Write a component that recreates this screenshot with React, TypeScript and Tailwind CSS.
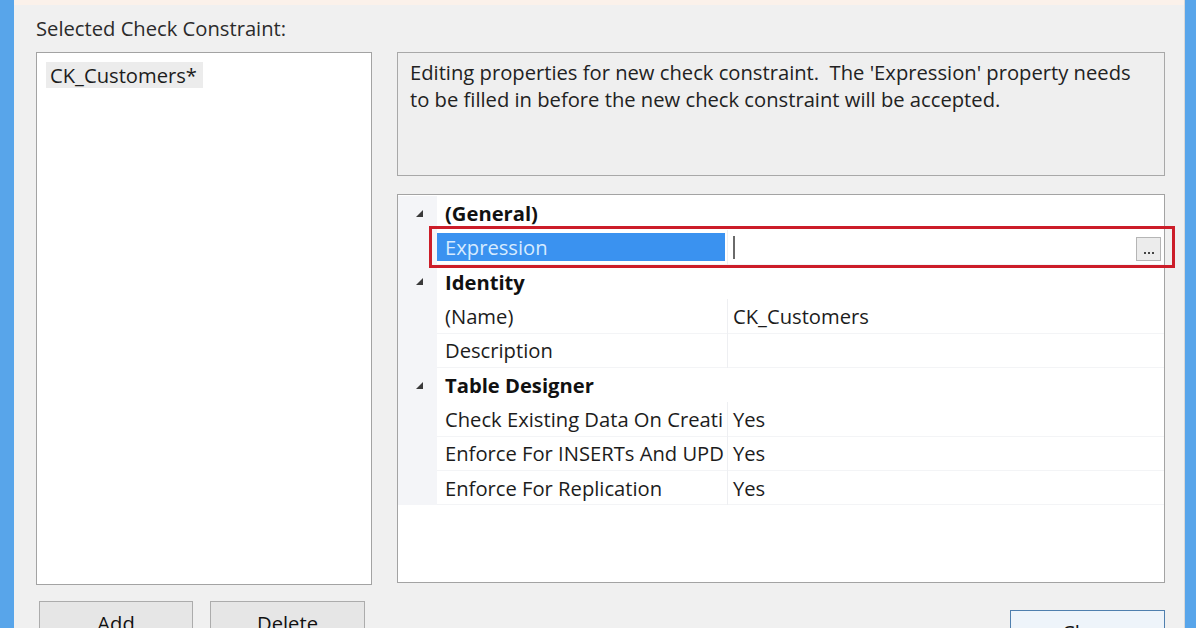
import React from "react";

type Row =
  | { kind: "cat"; label: string }
  | { kind: "prop"; name: string; value?: string; selected?: boolean };

const ROWS: Row[] = [
  { kind: "cat", label: "(General)" },
  { kind: "prop", name: "Expression", selected: true },
  { kind: "cat", label: "Identity" },
  { kind: "prop", name: "(Name)", value: "CK_Customers" },
  { kind: "prop", name: "Description", value: "" },
  { kind: "cat", label: "Table Designer" },
  { kind: "prop", name: "Check Existing Data On Creati", value: "Yes" },
  { kind: "prop", name: "Enforce For INSERTs And UPD", value: "Yes" },
  { kind: "prop", name: "Enforce For Replication", value: "Yes" },
];

function Expander() {
  return (
    <svg width="7" height="7" viewBox="0 0 7 7" className="block">
      <polygon points="7,0 7,7 0,7" fill="#3a3a3a" />
    </svg>
  );
}

function GridRow({ row }: { row: Row }) {
  if (row.kind === "cat") {
    return (
      <div className="flex h-[34.375px] items-center">
        <div className="flex h-full w-[39px] items-center justify-end bg-[#f4f5f8] pr-[14px]">
          <Expander />
        </div>
        <span className="pl-[8px] font-bold text-[#111]">{row.label}</span>
      </div>
    );
  }
  return (
    <div className="flex h-[34.375px] items-stretch">
      <div className="w-[39px] bg-[#f4f5f8]" />
      <div className="flex w-[290px] items-stretch border-b border-[#f3f4f6] py-[3px] pr-[2px]">
        <div
          className={
            row.selected
              ? "flex flex-1 items-center overflow-hidden whitespace-nowrap bg-[#3a92f0] pl-[8px] text-[#d6ebff]"
              : "flex flex-1 items-center overflow-hidden whitespace-nowrap pl-[8px]"
          }
        >
          {row.name}
        </div>
      </div>
      <div className="w-px bg-[#eeeff2]" />
      <div className="relative flex flex-1 items-center border-b border-[#f3f4f6] pl-[5px]">
        {row.selected ? (
          <>
            <div className="h-[23px] w-[2px] bg-[#6a6a6a]" />
            <div className="absolute right-[3px] top-[7px] flex h-[24px] w-[25px] items-end justify-center gap-[2px] border border-[#b5b5b5] bg-[#ececec] pb-[6px]">
              <div className="h-[2px] w-[2px] bg-[#444]" />
              <div className="h-[2px] w-[2px] bg-[#444]" />
              <div className="h-[2px] w-[2px] bg-[#444]" />
            </div>
          </>
        ) : (
          <span>{row.value}</span>
        )}
      </div>
    </div>
  );
}

function Button({ label, primary, className }: { label: string; primary?: boolean; className?: string }) {
  return (
    <div
      className={
        (primary
          ? "border border-[#4f7fae] bg-[#eef4fa] "
          : "border border-[#acacac] bg-[#e6e6e6] ") +
        "flex h-[42px] shrink-0 items-center justify-center pt-[2px] text-[#111] " +
        (className ?? "")
      }
    >
      {label}
    </div>
  );
}

export default function App() {
  return (
    <div className="flex h-[628px] w-[1196px] overflow-hidden bg-[#f0f0f0] font-['Open_Sans',sans-serif] text-[20.2px] text-[#1c1c1c]">
      <div className="w-[14px] shrink-0 bg-[#58a5ea]" />
      <div className="flex flex-1 flex-col overflow-hidden">
        <div className="h-[5px] shrink-0 bg-[#fbf1ea]" />
        <div className="shrink-0 pl-[22px] pt-[11px]">
          <div className="h-[24px] leading-[24px] text-[#2b2b2b]">Selected Check Constraint:</div>
          <div className="mt-[12px] flex gap-[25px]">
            {/* left: constraint list + buttons */}
            <div className="flex w-[336px] flex-col">
              <div className="h-[533px] shrink-0 border border-[#a3a3a3] bg-white pl-[9px] pt-[7px]">
                <span className="inline-block bg-[#ececec] pl-[4px] pr-[6px] leading-[26px]">CK_Customers*</span>
              </div>
              <div className="mt-[16px] flex gap-[17px] pl-[3px]">
                <Button label="Add" className="w-[154px]" />
                <Button label="Delete" className="w-[155px]" />
              </div>
            </div>
            {/* right: description + property grid */}
            <div className="flex w-[768px] flex-col">
              <div className="h-[124px] shrink-0 border border-[#a8a8a8] bg-[#efefef] px-[12px] pt-[6px] leading-[27px] text-[#222]">
                Editing properties for new check constraint.&nbsp; The 'Expression' property needs to be filled in before the new check constraint will be accepted.
              </div>
              <div className="relative mt-[18px] h-[389px] shrink-0 border border-[#a3a3a3] bg-white pt-[1px]">
                {ROWS.map((r, i) => (
                  <GridRow key={i} row={r} />
                ))}
                <div className="pointer-events-none absolute left-[31px] top-[31px] h-[42px] w-[746px] border-[3px] border-[#cc1d29]" />
              </div>
              <Button label="Close" primary className="ml-auto mt-[27px] w-[155px]" />
            </div>
          </div>
        </div>
      </div>
      <div className="w-[1px] shrink-0 bg-[#d8d8d8]" />
      <div className="w-[11px] shrink-0 bg-[#58a5ea]" />
    </div>
  );
}
